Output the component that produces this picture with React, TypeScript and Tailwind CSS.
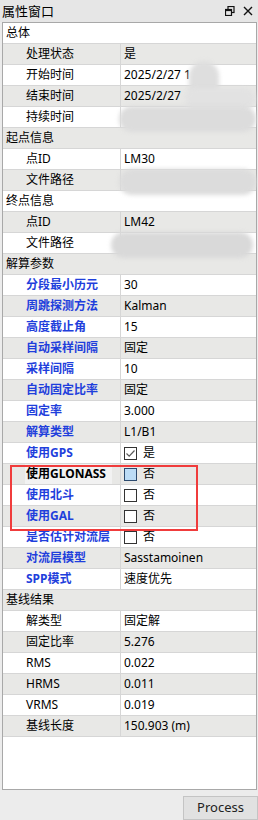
import React from "react";

type Row =
  | { kind: "cat"; label: string }
  | { kind: "prop"; label: string; value?: string; blue?: boolean; check?: "on" | "off" | "focus"; blur?: string; selected?: boolean };

const rows: Row[] = [
  { kind: "cat", label: "总体" },
  { kind: "prop", label: "处理状态", value: "是" },
  { kind: "prop", label: "开始时间", value: "2025/2/27 1", blur: "a" },
  { kind: "prop", label: "结束时间", value: "2025/2/27", blur: "b" },
  { kind: "prop", label: "持续时间", blur: "c" },
  { kind: "cat", label: "起点信息" },
  { kind: "prop", label: "点ID", value: "LM30" },
  { kind: "prop", label: "文件路径", blur: "c" },
  { kind: "cat", label: "终点信息" },
  { kind: "prop", label: "点ID", value: "LM42" },
  { kind: "prop", label: "文件路径", blur: "d" },
  { kind: "cat", label: "解算参数" },
  { kind: "prop", label: "分段最小历元", value: "30", blue: true },
  { kind: "prop", label: "周跳探测方法", value: "Kalman", blue: true },
  { kind: "prop", label: "高度截止角", value: "15", blue: true },
  { kind: "prop", label: "自动采样间隔", value: "固定", blue: true },
  { kind: "prop", label: "采样间隔", value: "10", blue: true },
  { kind: "prop", label: "自动固定比率", value: "固定", blue: true },
  { kind: "prop", label: "固定率", value: "3.000", blue: true },
  { kind: "prop", label: "解算类型", value: "L1/B1", blue: true },
  { kind: "prop", label: "使用GPS", value: "是", blue: true, check: "on" },
  { kind: "prop", label: "使用GLONASS", value: "否", check: "focus", selected: true },
  { kind: "prop", label: "使用北斗", value: "否", blue: true, check: "off" },
  { kind: "prop", label: "使用GAL", value: "否", blue: true, check: "off" },
  { kind: "prop", label: "是否估计对流层", value: "否", blue: true, check: "off" },
  { kind: "prop", label: "对流层模型", value: "Sasstamoinen", blue: true },
  { kind: "prop", label: "SPP模式", value: "速度优先", blue: true },
  { kind: "cat", label: "基线结果" },
  { kind: "prop", label: "解类型", value: "固定解" },
  { kind: "prop", label: "固定比率", value: "5.276" },
  { kind: "prop", label: "RMS", value: "0.022" },
  { kind: "prop", label: "HRMS", value: "0.011" },
  { kind: "prop", label: "VRMS", value: "0.019" },
  { kind: "prop", label: "基线长度", value: "150.903 (m)" },
];

const Box = ({ state }: { state: "on" | "off" | "focus" }) => (
  <span
    className={
      state === "focus"
        ? "w-[13px] h-[13px] border border-[#2c4a6e] bg-[#bcdcf6] shrink-0"
        : "w-[13px] h-[13px] border border-[#333333] bg-white shrink-0 flex items-center justify-center"
    }
  >
    {state === "on" && (
      <svg width="11" height="11" viewBox="0 0 11 11">
        <path d="M1.5 5.5 L4.2 8.2 L9.5 2.5" fill="none" stroke="#5a5a5a" strokeWidth="1.2" />
      </svg>
    )}
  </span>
);

// privacy smudges over some values
const Blur = ({ kind }: { kind: string }) => {
  if (kind === "a")
    return <span className="absolute left-[68px] top-[-4px] w-[30px] h-[40px] rounded-full bg-[#dedede] blur-[2px]" />;
  if (kind === "b")
    return <span className="absolute left-[64px] top-[2px] w-[70px] h-[22px] rounded-full bg-[#e2e2e2] blur-[2px]" />;
  if (kind === "c")
    return <span className="absolute left-[-2px] top-[-1px] w-[137px] h-[26px] rounded-full bg-[#dcdcdc] blur-[2px]" />;
  return <span className="absolute left-[-10px] top-[-1px] w-[142px] h-[26px] rounded-full bg-[#d9d9d9] blur-[2px]" />;
};

export default function App() {
  return (
    <div
      className="w-[258px] h-[820px] bg-[#ececec] overflow-hidden relative text-[12px] text-black"
      style={{ fontFamily: '"Noto Sans", "Noto Sans CJK SC", sans-serif' }}
    >
      <div className="h-[22px] flex items-center justify-between pl-[2px] pr-[5px] bg-[#e6e6e6]">
        <span className="text-[13px] leading-none">属性窗口</span>
        <div className="flex items-center gap-[8px]">
          <svg width="10" height="10" viewBox="0 0 10 10">
            <rect x="3" y="0.5" width="6" height="6" fill="none" stroke="#111" strokeWidth="1.2" />
            <rect x="0.5" y="3.5" width="6" height="6" fill="#e6e6e6" stroke="#111" strokeWidth="1.2" />
            <line x1="0.5" y1="4.3" x2="6.5" y2="4.3" stroke="#111" strokeWidth="1.6" />
          </svg>
          <svg width="10" height="10" viewBox="0 0 10 10">
            <path d="M1 1 L9 9 M9 1 L1 9" stroke="#111" strokeWidth="1.4" />
          </svg>
        </div>
      </div>

      <div className="ml-[2px] mr-[1px] h-[768px] border border-[#a8a8a8] bg-white flex flex-col">
        {rows.map((r, i) => {
          const bg = i % 2 === 0 ? "bg-white" : "bg-[#e8e8e6]";
          if (r.kind === "cat")
            return (
              <div key={i} className={`h-[21px] shrink-0 border-b border-[#d6d6d6] ${bg} flex items-center pl-[3px]`}>
                {r.label}
              </div>
            );
          return (
            <div key={i} className={`h-[21px] shrink-0 border-b border-[#d6d6d6] ${bg} flex`}>
              <div className="w-[118px] shrink-0 border-r border-[#d6d6d6] flex items-center pl-[23px]">
                <span
                  className={`flex items-center h-full ${r.selected ? "bg-[#f2f2f2] pr-[6px] -ml-[1px] pl-[1px] font-bold" : ""} ${r.blue ? "text-[#1f3fdc] font-bold" : ""}`}
                >
                  {r.label}
                </span>
              </div>
              <div className="flex-1 relative flex items-center pl-[3px] gap-[6px] whitespace-nowrap overflow-visible">
                {r.check && <Box state={r.check} />}
                {r.value && <span>{r.value}</span>}
                {r.blur && <Blur kind={r.blur} />}
              </div>
            </div>
          );
        })}
      </div>

      <div className="flex justify-end mt-[6px]">
        <button className="w-[75px] h-[24px] bg-[#e1e1e1] border border-[#c4c4c4] text-[13px] text-[#222] flex items-center justify-center">
          Process
        </button>
      </div>

      <div className="absolute left-[10px] top-[465px] w-[188px] h-[66px] border-2 border-[#f03c3c] pointer-events-none" />
    </div>
  );
}
